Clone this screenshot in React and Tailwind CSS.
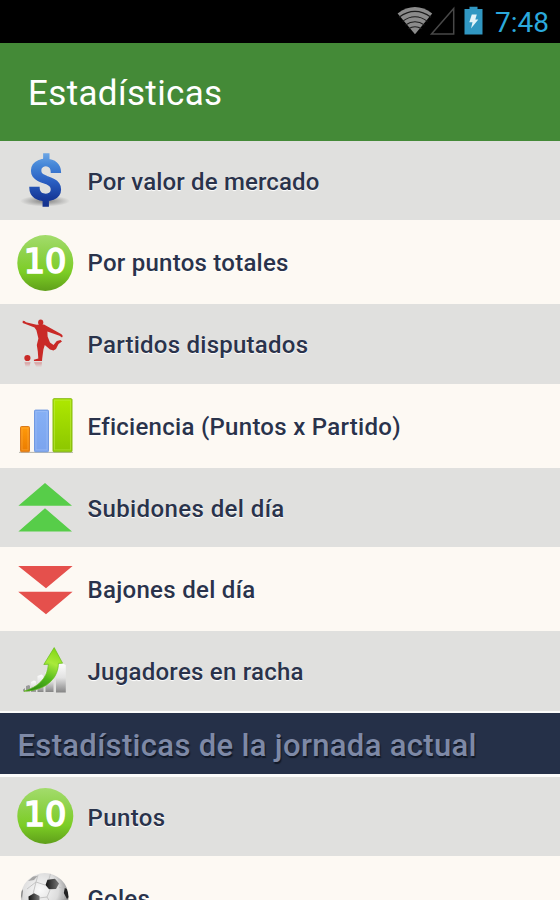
import React from 'react';
import clsx from 'clsx';

const Icon = ({ children }) => (
  <svg width="56" height="56" viewBox="0 0 56 56" className="shrink-0 overflow-visible">
    {children}
  </svg>
);

const Gradient = ({ id, stops }) => (
  <linearGradient id={id} x1="0" y1="0" x2="0" y2="1">
    {stops.map((color, i) => (
      <stop key={color} offset={i / (stops.length - 1)} stopColor={color} />
    ))}
  </linearGradient>
);

const DollarIcon = () => (
  <Icon>
    <defs>
      <Gradient id="dollar" stops={['#7fb4ea', '#4587d8', '#2a5fc2', '#173a9a', '#122a80']} />
      <radialGradient id="dollarShadow">
        <stop offset="0" stopColor="#555" stopOpacity="0.7" />
        <stop offset="1" stopColor="#555" stopOpacity="0" />
      </radialGradient>
    </defs>
    <ellipse cx="28" cy="49" rx="25" ry="5.5" fill="url(#dollarShadow)" />
    <text
      textAnchor="middle"
      transform="translate(28.3 48.2) scale(1.12 1)"
      fill="url(#dollar)"
      stroke="url(#dollar)"
      strokeWidth="1.4"
      className="font-[Roboto,sans-serif] text-[56px] font-bold"
    >
      $
    </text>
  </Icon>
);

const TenIcon = () => (
  <Icon>
    <defs>
      <Gradient id="ten" stops={['#a3dc6c', '#8ed24a', '#7ccd25', '#5f9f1a']} />
    </defs>
    <circle cx="28.3" cy="28" r="28" fill="url(#ten)" />
    <text
      x="6.8"
      y="38.2"
      fill="#fff"
      stroke="#fff"
      strokeWidth="1.7"
      className="font-['DejaVu_Sans',sans-serif] text-[33.5px]"
    >
      10
    </text>
  </Icon>
);

const PlayerIcon = () => (
  <Icon>
    <defs>
      <Gradient id="reflection" stops={['#d99a9a', '#e0e0df']} />
    </defs>
    <g fill="#c92a27">
      <ellipse cx="23.7" cy="7.4" rx="2.6" ry="3" />
      <path d="M5.8 5.8 7.5 6 9 7.2 19.5 9.8 27 9.6 44.5 19.2 45.8 20.9 45 22.4 42.5 20.8 30.4 16.6 30.6 21.4 33 27.4 36.5 30 39.8 25.9 43.6 25 45 26.4 41.5 28.9 39 33.9 36.5 35.6 33 34.4 27.8 30 26.4 34.4 25.2 43.4 25 46 17 46 16.8 44.7 21.3 43.4 20.8 36.4 19.8 29.9 21.4 23.4 19.4 15.2 17.5 12.6 7.8 8.8 5.6 7.9z" />
      <circle cx="10.4" cy="43" r="3.1" />
    </g>
    <path d="M7.5 47.3h6l-1 4.5h-4zM17 47.3h8l-.5 5h-5z" fill="url(#reflection)" />
  </Icon>
);

const BARS = [
  { x: 3, y: 27, w: 10, fill: 'url(#orange)', edge: '#d97a1c', light: '#ffb14e' },
  { x: 17, y: 10.6, w: 15, fill: 'url(#blue)', edge: '#7099e0', light: '#a9c6fa' },
  { x: 35.5, y: -0.8, w: 20, fill: 'url(#green)', edge: '#86b916', light: '#c4f04a' },
];

const BarsIcon = () => (
  <Icon>
    <defs>
      <Gradient id="orange" stops={['#ff9a0a', '#ea7b00']} />
      <Gradient id="blue" stops={['#86b0f5', '#7ba4ee']} />
      <Gradient id="green" stops={['#aee800', '#8cc600']} />
    </defs>
    <path d="M2 53.4h54" stroke="#b5b5ad" strokeWidth="1" />
    {BARS.map((b) => (
      <g key={b.x}>
        <rect x={b.x + 0.5} y={b.y + 0.5} width={b.w - 1} height={52.3 - b.y} rx="1" fill={b.fill} stroke={b.edge} />
        <rect x={b.x + 2} y={b.y + 2} width={b.w - 4} height={48.9 - b.y} fill="none" stroke={b.light} strokeOpacity="0.5" />
      </g>
    ))}
  </Icon>
);

const UpIcon = () => (
  <Icon>
    <path d="M28 3.9 55 26.7H1.4zM28 29.3 55 52.4H1.4z" fill="#57cd49" />
  </Icon>
);

const DownIcon = () => (
  <Icon>
    <path d="M1.2 4H55.6L29 26.2zM1.2 29.8H55.6L29 52.2z" fill="#e5504c" />
  </Icon>
);

const StreakIcon = () => (
  <Icon>
    <defs>
      <Gradient id="column" stops={['#fdfdfd', '#e2e2e2', '#858585']} />
      <linearGradient id="arrow" x1="0.7" y1="0" x2="0.3" y2="1">
        <stop offset="0" stopColor="#86d818" />
        <stop offset="0.3" stopColor="#a9ea3a" />
        <stop offset="0.65" stopColor="#52b81c" />
        <stop offset="1" stopColor="#2f8a16" />
      </linearGradient>
    </defs>
    <path d="M6 47.5 8 46v3.5H6zM9 44l3-1 1 1v5.5H9z" fill="#9a9a9a" />
    <path d="M14 40l3-1.5 2 1v10.3h-5z" fill="url(#column)" />
    <path d="M20.5 34l4-1.5 2 1.5v16h-6z" fill="url(#column)" />
    <path d="M28.5 30l5-2 3 2v20h-8z" fill="url(#column)" />
    <path d="M39 23l6-2 3.8 2v27.5H39z" fill="url(#column)" />
    <path
      d="M37.2 5.6 45.6 21.2 41.4 21.4C41.5 33.5 32 48.5 7 49.2 20 45.5 30.5 37 31.4 22.3L26.8 22.5z"
      fill="url(#arrow)"
      stroke="#63bd1a"
      strokeWidth="0.7"
    />
  </Icon>
);

const BallIcon = () => (
  <Icon>
    <defs>
      <radialGradient id="ball" cx="0.4" cy="0.35" r="0.65">
        <stop offset="0" stopColor="#fafafa" />
        <stop offset="0.6" stopColor="#dcdcdc" />
        <stop offset="1" stopColor="#858585" />
      </radialGradient>
      <linearGradient id="patch">
        <stop offset="0" stopColor="#151515" />
        <stop offset="1" stopColor="#777" />
      </linearGradient>
      <clipPath id="ballClip">
        <circle cx="27.7" cy="25.9" r="23.8" />
      </clipPath>
    </defs>
    <circle cx="27.7" cy="25.9" r="23.8" fill="url(#ball)" />
    <g clipPath="url(#ballClip)">
      <path
        d="M28 14 19 11 10 18M19 11 21 4M19 11 16 23M32 8 34 1M41 9 45 7M42 16 47 18M33 19 30 26 22 27M30 26 36 36M47 18 46 28"
        fill="none"
        stroke="#c0c0c0"
        strokeWidth="0.9"
      />
      <path d="M30.5 8.8 38 7.8 42 12.5 39 18 32 18.2 28.5 14z" fill="url(#patch)" />
      <path d="M11.5 25.5 17 22.3 22.5 25 22.5 32 12 33z" fill="url(#patch)" />
      <path d="M47.8 17 50 18 52 26 50 28 46.8 22z" fill="#222" />
      <path d="M11 10 16 5.5 20.5 5 17 9z" fill="#a5a5a5" />
      <path d="M3 22 5 18 6 20 5 28z" fill="#888" />
    </g>
  </Icon>
);

const StatusBar = () => (
  <div className="flex h-[43px] shrink-0 items-start justify-end bg-black pr-[11px]">
    <svg width="88" height="43" viewBox="396 0 88 43" className="mr-[10px]">
      <path d="M414 34.3 396.6 13.4Q414 .8 431.2 13.4z" fill="#8b8b8b" />
      <g fill="none" stroke="#1c1c1c" strokeWidth="1.1">
        <path d="M398 17.2Q414 5.6 430 17.2" />
        <path d="M401.5 21.4Q414 12.2 426.5 21.4" />
        <path d="M404.5 25Q414 18.4 423.5 25" />
        <path d="M407.5 28.8Q414 24.6 420.5 28.8" />
      </g>
      <path d="M452.7 8.5V34H430.5z" fill="none" stroke="#484848" strokeWidth="1.5" />
      <path d="M463.5 9h5V6.8h8V9h5v25.5h-18z" fill="#3197c2" />
      <path d="M470.8 14.5h5l-1.5 5h3L470 28.5l1.5-6.3h-3.2z" fill="#e4f3f8" />
    </svg>
    <span className="mt-[5px] text-[28px] leading-[36px] text-[#2ba9dc]">7:48</span>
  </div>
);

const Row = ({ icon: RowIcon, label, tracking = 'tracking-[0.25px]', dark }) => (
  <li
    className={clsx(
      'flex shrink-0 items-start pl-[17px]',
      dark ? 'h-[79.33px] bg-[#e0e0de] pt-[11px]' : 'h-[84px] bg-[#fdf9f3] pt-[15px]'
    )}
  >
    <RowIcon />
    <span
      className={clsx(
        'ml-[14.5px] text-[24px] font-medium leading-[32px] whitespace-nowrap text-[#2a334b] [text-shadow:0_1px_1px_#fff]',
        dark ? 'mt-[14px]' : 'mt-[12px]',
        tracking
      )}
    >
      {label}
    </span>
  </li>
);

const general = [
  { label: 'Por valor de mercado', icon: DollarIcon, tracking: 'tracking-[0.15px]' },
  { label: 'Por puntos totales', icon: TenIcon },
  { label: 'Partidos disputados', icon: PlayerIcon },
  { label: 'Eficiencia (Puntos x Partido)', icon: BarsIcon, tracking: 'tracking-[0.28px]' },
  { label: 'Subidones del día', icon: UpIcon, tracking: 'tracking-[0.4px]' },
  { label: 'Bajones del día', icon: DownIcon, tracking: 'tracking-[0.3px]' },
  { label: 'Jugadores en racha', icon: StreakIcon },
];

const current = [
  { label: 'Puntos', icon: TenIcon, tracking: 'tracking-[0.4px]' },
  { label: 'Goles', icon: BallIcon },
];

const StatsList = ({ items, className }) => (
  <ul className={clsx('flex flex-col', className)}>
    {items.map((item, i) => (
      <Row key={item.label} {...item} dark={i % 2 === 0} />
    ))}
  </ul>
);

const App = () => {
  return (
    <div className="flex h-[900px] w-[560px] flex-col overflow-hidden bg-[#e0e0de] font-[Roboto,sans-serif]">
      <StatusBar />
      <header className="flex h-[98px] shrink-0 items-center bg-[#448a37] pt-[3px] pl-[28px]">
        <h1 className="text-[35px] leading-[40px] tracking-[0.35px] text-white">Estadísticas</h1>
      </header>
      <StatsList items={general} className="h-[570px] shrink-0" />
      <h2 className="flex h-[66px] shrink-0 items-center border-t-2 border-b-3 border-[#fbfbfa] bg-[#253048] pt-[5px] pl-[17.5px] text-[31px] font-medium tracking-[0.34px] whitespace-nowrap text-[#7e89a6] [text-shadow:1px_2px_1px_#111827]">
        Estadísticas de la jornada actual
      </h2>
      <StatsList items={current} />
    </div>
  );
};

export default App;
